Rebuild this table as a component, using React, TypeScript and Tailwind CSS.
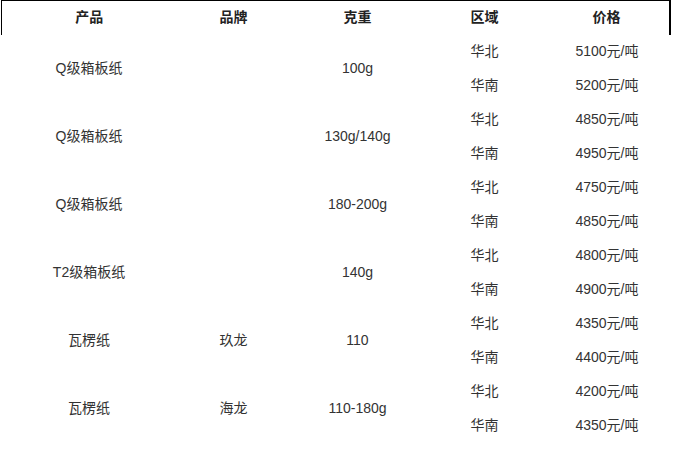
import React from "react";

const rows = [
  { product: "Q级箱板纸", brand: "", weight: "100g", prices: ["5100元/吨", "5200元/吨"] },
  { product: "Q级箱板纸", brand: "", weight: "130g/140g", prices: ["4850元/吨", "4950元/吨"] },
  { product: "Q级箱板纸", brand: "", weight: "180-200g", prices: ["4750元/吨", "4850元/吨"] },
  { product: "T2级箱板纸", brand: "", weight: "140g", prices: ["4800元/吨", "4900元/吨"] },
  { product: "瓦楞纸", brand: "玖龙", weight: "110", prices: ["4350元/吨", "4400元/吨"] },
  { product: "瓦楞纸", brand: "海龙", weight: "110-180g", prices: ["4200元/吨", "4350元/吨"] },
];

const App = () => {
  return (
    <div className="w-[673px] h-[449px] bg-white overflow-hidden pl-px font-['Liberation_Sans','Noto_Sans_CJK_SC',sans-serif] text-[14px] text-[#333]">
      <table className="w-[668px] border-collapse table-fixed">
        <colgroup>
          <col className="w-[175px]" />
          <col className="w-[114px]" />
          <col className="w-[134px]" />
          <col className="w-[120px]" />
          <col className="w-[125px]" />
        </colgroup>
        <thead>
          <tr className="h-[34px] border-t border-l border-r-2 border-black font-bold text-[#222]">
            <th className="p-0 pb-px">产品</th>
            <th className="p-0 pb-px">品牌</th>
            <th className="p-0 pb-px">克重</th>
            <th className="p-0 pb-px">区域</th>
            <th className="p-0 pb-px">价格</th>
          </tr>
        </thead>
        <tbody>
          {rows.map((r, i) => (
            <React.Fragment key={i}>
              <tr className="h-[34px]">
                <td rowSpan={2} className="p-0 text-center">{r.product}</td>
                <td rowSpan={2} className="p-0 text-center">{r.brand}</td>
                <td rowSpan={2} className="p-0 text-center">{r.weight}</td>
                <td className="p-0 pb-px text-center">华北</td>
                <td className="p-0 pb-px text-center">{r.prices[0]}</td>
              </tr>
              <tr className="h-[34px]">
                <td className="p-0 pb-px text-center">华南</td>
                <td className="p-0 pb-px text-center">{r.prices[1]}</td>
              </tr>
            </React.Fragment>
          ))}
        </tbody>
      </table>
    </div>
  );
};

export default App;
